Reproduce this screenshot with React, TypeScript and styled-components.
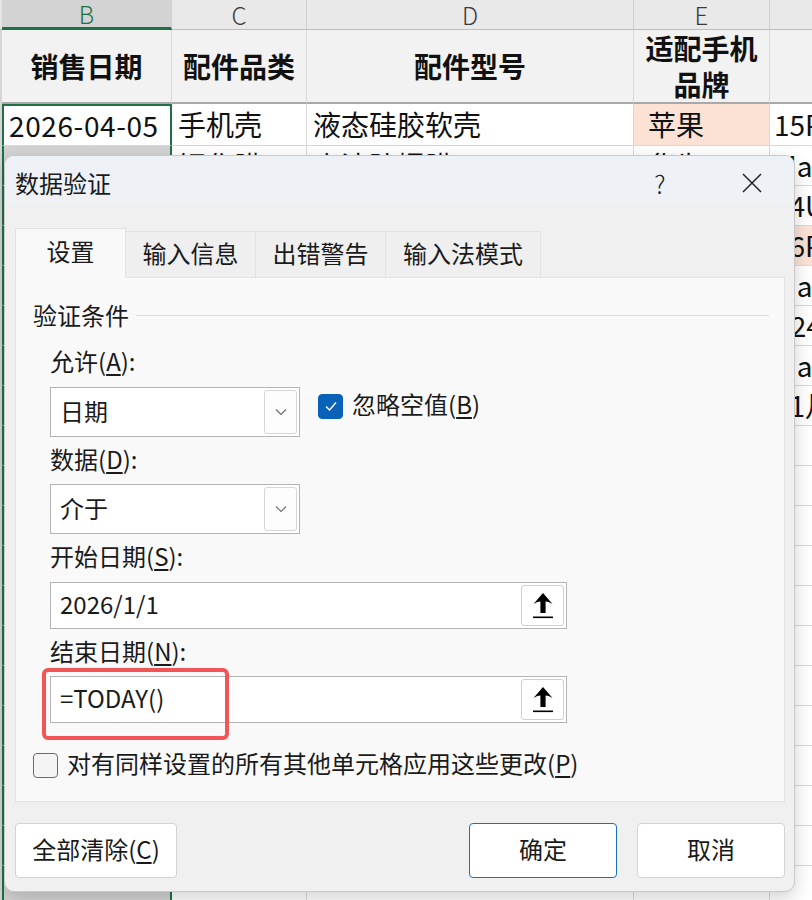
import React from "react";
import styled, { createGlobalStyle, css } from "styled-components";

const FONT = `"Noto Sans CJK SC", "Noto Sans", sans-serif`;
const GREEN = "#1f7145";
const GRID = "#d9d9d9";

const Global = createGlobalStyle`
  html, body { margin: 0; padding: 0; background: #fff; }
  body { font-family: ${FONT}; color: #1a1a1a; }
  * { box-sizing: border-box; }
`;

const Stage = styled.div`
  position: relative;
  width: 812px;
  height: 900px;
  overflow: hidden;
  background: #fff;
`;

/* ---------- spreadsheet ---------- */
const Sheet = styled.div`
  display: grid;
  grid-template-columns: 2px 170px 135px 327px 136px 300px;
  grid-template-rows: 30px 74px 42px repeat(19, 40px);
  font-family: ${FONT};
`;

const Edge = styled.div<{ $head?: boolean }>`
  background: ${(p) => (p.$head ? "#e4e4e4" : "#d6d6d6")};
  border-bottom: ${(p) => (p.$head ? "1px solid #bdbdbd" : "none")};
`;

const ColHead = styled.div<{ $sel?: boolean }>`
  display: flex;
  align-items: center;
  justify-content: center;
  font-size: 24px;
  font-weight: 300;
  line-height: 1;
  color: #3a3a3a;
  background: #e9e9e9;
  border-right: 1px solid #cfcfcf;
  border-bottom: 1px solid #bdbdbd;
  ${(p) =>
    p.$sel &&
    css`
      background: #d3d3d3;
      color: ${GREEN};
      border-bottom: 3px solid ${GREEN};
    `}
`;

const HeadCell = styled.div`
  display: flex;
  align-items: center;
  justify-content: center;
  text-align: center;
  font-size: 28px;
  font-weight: 700;
  line-height: 36px;
  color: #111;
  background: #f2f2f2;
  border-right: 1px solid ${GRID};
  border-bottom: 2px solid #a9a9a9;
  padding: 0 8px;
  overflow: hidden;
`;

const DataCell = styled.div<{ $sel?: "active" | "range"; $fill?: string; $pad?: number }>`
  display: flex;
  align-items: center;
  padding-left: ${(p) => p.$pad ?? 6}px;
  padding-bottom: 2px;
  font-size: 28px;
  line-height: 1;
  color: #111;
  white-space: nowrap;
  overflow: hidden;
  background: ${(p) => p.$fill ?? "#fff"};
  border-right: 1px solid ${GRID};
  border-bottom: 1px solid ${GRID};
  ${(p) =>
    p.$sel === "active" &&
    css`
      border: 2px solid ${GREEN};
      border-bottom: 1px solid ${GRID};
      padding-left: 5px;
      background: #fff;
    `}
  ${(p) =>
    p.$sel === "range" &&
    css`
      border-left: 2px solid ${GREEN};
      border-right: 2px solid ${GREEN};
      background: #d3d3d3;
    `}
`;

const DateText = styled.span`
  letter-spacing: 0.6px;
`;

/* ---------- dialog ---------- */
const Dialog = styled.div`
  position: absolute;
  left: 4px;
  top: 155px;
  width: 791px;
  height: 737px;
  display: flex;
  flex-direction: column;
  background: #f0f0f0;
  border: 1px solid #c9c9c9;
  border-radius: 10px;
  box-shadow: 0 6px 18px rgba(0, 0, 0, 0.18);
  overflow: hidden;
  font-family: ${FONT};
  color: #1a1a1a;
`;

const TitleBar = styled.div`
  height: 56px;
  flex: none;
  display: flex;
  align-items: center;
  padding: 0 19px 3px 10px;
  background: linear-gradient(#edf1f6, #eef1f5 70%, #f0f0f0);
`;

const Title = styled.div`
  flex: 1;
  font-size: 24px;
  line-height: 1;
`;

const TitleBtn = styled.div`
  width: 46px;
  height: 46px;
  display: flex;
  align-items: center;
  justify-content: center;
  font-size: 25px;
  font-weight: 300;
  color: #222;
  & + & {
    margin-left: 46px;
  }
`;

const Body = styled.div`
  flex: 1;
  display: flex;
  flex-direction: column;
  padding: 15px 9px 14px 10px;
`;

const Tabs = styled.div`
  display: flex;
  align-items: flex-end;
  height: 50px;
  position: relative;
  z-index: 1;
`;

const Tab = styled.div<{ $active?: boolean; $w: number }>`
  width: ${(p) => p.$w}px;
  display: flex;
  align-items: center;
  justify-content: center;
  font-size: 24px;
  line-height: 1;
  ${(p) =>
    p.$active
      ? css`
          height: 50px;
          background: #f9f9f9;
          border: 1px solid #e2e2e2;
          border-bottom: none;
          margin-bottom: -1px;
          padding-bottom: 6px;
        `
      : css`
          height: 46px;
          background: #efefef;
          border: 1px solid #e2e2e2;
          border-left: none;
          border-bottom: none;
          padding-bottom: 4px;
        `}
`;

const Panel = styled.div`
  height: 525px;
  flex: none;
  background: #f9f9f9;
  border: 1px solid #e4e4e4;
  padding: 24px 15px 0 17px;
  display: flex;
  flex-direction: column;
`;

const GroupHead = styled.div`
  display: flex;
  align-items: center;
  height: 30px;
  font-size: 24px;
  line-height: 26px;
  padding-bottom: 4px;
  &::after {
    content: "";
    flex: 1;
    height: 1px;
    background: #dcdcdc;
    margin: 0 0 0 7px;
  }
`;

const Indent = styled.div`
  padding-left: 17px;
  display: flex;
  flex-direction: column;
`;

const Label = styled.div<{ $mt: number }>`
  margin-top: ${(p) => p.$mt}px;
  height: 32px;
  font-size: 24px;
  line-height: 26px;
  u {
    text-decoration-thickness: 1.5px;
    text-underline-offset: 3px;
  }
`;

const FieldRow = styled.div<{ $mt: number }>`
  margin-top: ${(p) => p.$mt}px;
  display: flex;
  align-items: flex-start;
`;

const Select = styled.div`
  width: 250px;
  height: 50px;
  display: flex;
  align-items: center;
  background: #fff;
  border: 1px solid #b4b4b4;
  padding: 2px 2px 2px 9px;
  font-size: 24px;
`;

const SelectText = styled.div`
  flex: 1;
  line-height: 1;
  padding-bottom: 2px;
`;

const DropBtn = styled.div`
  width: 33px;
  height: 100%;
  display: flex;
  align-items: center;
  justify-content: center;
  border: 1px solid #d6d6d6;
  border-radius: 3px;
  background: #fdfdfd;
`;

const CheckGroup = styled.label<{ $ml?: number }>`
  display: flex;
  align-items: center;
  height: 38px;
  margin-left: ${(p) => p.$ml ?? 0}px;
  font-size: 24px;
  line-height: 1;
  gap: 9px;
  u {
    text-decoration-thickness: 1.5px;
    text-underline-offset: 3px;
  }
`;

const CheckText = styled.span`
  padding-bottom: 4px;
`;

const Box = styled.span<{ $checked?: boolean }>`
  width: 25px;
  height: 25px;
  border-radius: 4px;
  display: flex;
  align-items: center;
  justify-content: center;
  flex: none;
  ${(p) =>
    p.$checked
      ? css`
          background: #0a62b8;
          border: 1px solid #0a62b8;
        `
      : css`
          background: #f4f4f4;
          border: 1.5px solid #6b6b6b;
        `}
`;

const InputWrap = styled.div<{ $mt: number }>`
  position: relative;
  margin-top: ${(p) => p.$mt}px;
  width: 517px;
  height: 47px;
  display: flex;
  align-items: center;
  background: #fff;
  border: 1px solid #b4b4b4;
  padding: 2px 2px 2px 9px;
  font-size: 24px;
`;

const InputText = styled.div`
  flex: 1;
  line-height: 1;
  padding-bottom: 4px;
`;

const RefBtn = styled.div`
  width: 43px;
  height: 100%;
  display: flex;
  align-items: center;
  justify-content: center;
  background: #fff;
  border: 1px solid #cfcfcf;
  border-radius: 3px;
`;

const Highlight = styled.div`
  position: absolute;
  left: -9px;
  top: -9px;
  width: 187px;
  height: 72px;
  border: 4px solid #f25555;
  border-radius: 6px;
  pointer-events: none;
`;

const ApplyRow = styled.div`
  margin-top: 23px;
`;

const Footer = styled.div`
  margin-top: 21px;
  display: flex;
  align-items: center;
`;

const Button = styled.div<{ $w: number; $primary?: boolean }>`
  width: ${(p) => p.$w}px;
  height: 55px;
  display: flex;
  align-items: center;
  justify-content: center;
  padding-bottom: 4px;
  background: #fff;
  border: 1px solid ${(p) => (p.$primary ? "#1b6fbf" : "#d3d3d3")};
  border-radius: 4px;
  font-size: 24px;
  line-height: 1;
  u {
    text-decoration-thickness: 1.5px;
    text-underline-offset: 3px;
  }
`;

const Spacer = styled.div`
  flex: 1;
`;

const ButtonGap = styled.div`
  width: 20px;
`;

/* ---------- icons ---------- */
const Chevron = () => (
  <svg width="12" height="8" viewBox="0 0 12 8">
    <path d="M1 1.5 L6 6.5 L11 1.5" fill="none" stroke="#6a6a6a" strokeWidth="1.1" />
  </svg>
);

const Check = () => (
  <svg width="16" height="16" viewBox="0 0 16 16">
    <path d="M3 8.5 L6.5 12 L13 4.5" fill="none" stroke="#fff" strokeWidth="1.4" />
  </svg>
);

const CloseIcon = () => (
  <svg width="24" height="24" viewBox="0 0 24 24">
    <path d="M3 3 L21 21 M21 3 L3 21" stroke="#222" strokeWidth="1.5" />
  </svg>
);

const UpArrow = () => (
  <svg width="22" height="27" viewBox="0 0 22 27">
    <path d="M11 1 L20.5 12 Q16 9.5 13.6 9.6 L13.6 21 L8.4 21 L8.4 9.6 Q6 9.5 1.5 12 Z" fill="#000" />
    <rect x="1" y="24.5" width="20" height="1.6" fill="#000" />
  </svg>
);

/* ---------- data ---------- */
type Row = { c: string; d: string; e: string; f: string; eFill?: string; fFill?: string };
const PEACH = "#fbe2d5";
const rows: Row[] = [
  { c: "钢化膜", d: "高清防爆膜", e: "华为", f: "Mate60" },
  { c: "充电器", d: "快充充电头", e: "小米", f: "14Ultra" },
  { c: "数据线", d: "编织数据线", e: "苹果", f: "16Pro", eFill: PEACH, fFill: PEACH },
  { c: "手机壳", d: "磨砂防摔壳", e: "华为", f: "Mate70" },
  { c: "耳机", d: "蓝牙耳机", e: "三星", f: "S24" },
  { c: "支架", d: "桌面支架", e: "华为", f: "MateX5" },
  { c: "贴纸", d: "背贴", e: "通用", f: "11月" },
];

export default function App() {
  const filler = Array.from({ length: 19 - rows.length });
  return (
    <Stage>
      <Global />
      <Sheet>
        <Edge $head />
        <ColHead $sel>B</ColHead>
        <ColHead>C</ColHead>
        <ColHead>D</ColHead>
        <ColHead>E</ColHead>
        <ColHead>F</ColHead>

        <Edge />
        <HeadCell>销售日期</HeadCell>
        <HeadCell>配件品类</HeadCell>
        <HeadCell>配件型号</HeadCell>
        <HeadCell>适配手机品牌</HeadCell>
        <HeadCell>适配机型</HeadCell>

        <Edge />
        <DataCell $sel="active">
          <DateText>2026-04-05</DateText>
        </DataCell>
        <DataCell>手机壳</DataCell>
        <DataCell>液态硅胶软壳</DataCell>
        <DataCell $fill={PEACH} $pad={14}>苹果</DataCell>
        <DataCell $pad={4}>15Pro</DataCell>

        {rows.map((r, i) => (
          <React.Fragment key={i}>
            <Edge />
            <DataCell $sel="range" />
            <DataCell>{r.c}</DataCell>
            <DataCell>{r.d}</DataCell>
            <DataCell $fill={r.eFill} $pad={14}>{r.e}</DataCell>
            <DataCell $fill={r.fFill} $pad={4}>{r.f}</DataCell>
          </React.Fragment>
        ))}
        {filler.map((_, i) => (
          <React.Fragment key={`f${i}`}>
            <Edge />
            <DataCell $sel="range" />
            <DataCell />
            <DataCell />
            <DataCell />
            <DataCell />
          </React.Fragment>
        ))}
      </Sheet>

      <Dialog>
        <TitleBar>
          <Title>数据验证</Title>
          <TitleBtn>?</TitleBtn>
          <TitleBtn>
            <CloseIcon />
          </TitleBtn>
        </TitleBar>
        <Body>
          <Tabs>
            <Tab $active $w={111}>设置</Tab>
            <Tab $w={130}>输入信息</Tab>
            <Tab $w={130}>出错警告</Tab>
            <Tab $w={155}>输入法模式</Tab>
          </Tabs>
          <Panel>
            <GroupHead>验证条件</GroupHead>
            <Indent>
              <Label $mt={16}>
                允许(<u>A</u>):
              </Label>
              <FieldRow $mt={7}>
                <Select>
                  <SelectText>日期</SelectText>
                  <DropBtn>
                    <Chevron />
                  </DropBtn>
                </Select>
                <CheckGroup $ml={18}>
                  <Box $checked>
                    <Check />
                  </Box>
                  <CheckText>
                    忽略空值(<u>B</u>)
                  </CheckText>
                </CheckGroup>
              </FieldRow>
              <Label $mt={9}>
                数据(<u>D</u>):
              </Label>
              <FieldRow $mt={6}>
                <Select>
                  <SelectText>介于</SelectText>
                  <DropBtn>
                    <Chevron />
                  </DropBtn>
                </Select>
              </FieldRow>
              <Label $mt={9}>
                开始日期(<u>S</u>):
              </Label>
              <InputWrap $mt={7}>
                <InputText>2026/1/1</InputText>
                <RefBtn>
                  <UpArrow />
                </RefBtn>
              </InputWrap>
              <Label $mt={9}>
                结束日期(<u>N</u>):
              </Label>
              <InputWrap $mt={6}>
                <InputText>=TODAY()</InputText>
                <RefBtn>
                  <UpArrow />
                </RefBtn>
                <Highlight />
              </InputWrap>
            </Indent>
            <ApplyRow>
              <CheckGroup>
                <Box />
                <CheckText>
                  对有同样设置的所有其他单元格应用这些更改(<u>P</u>)
                </CheckText>
              </CheckGroup>
            </ApplyRow>
          </Panel>
          <Footer>
            <Button $w={162}>
              全部清除(<u>C</u>)
            </Button>
            <Spacer />
            <Button $w={148} $primary>
              确定
            </Button>
            <ButtonGap />
            <Button $w={148}>取消</Button>
          </Footer>
        </Body>
      </Dialog>
    </Stage>
  );
}
